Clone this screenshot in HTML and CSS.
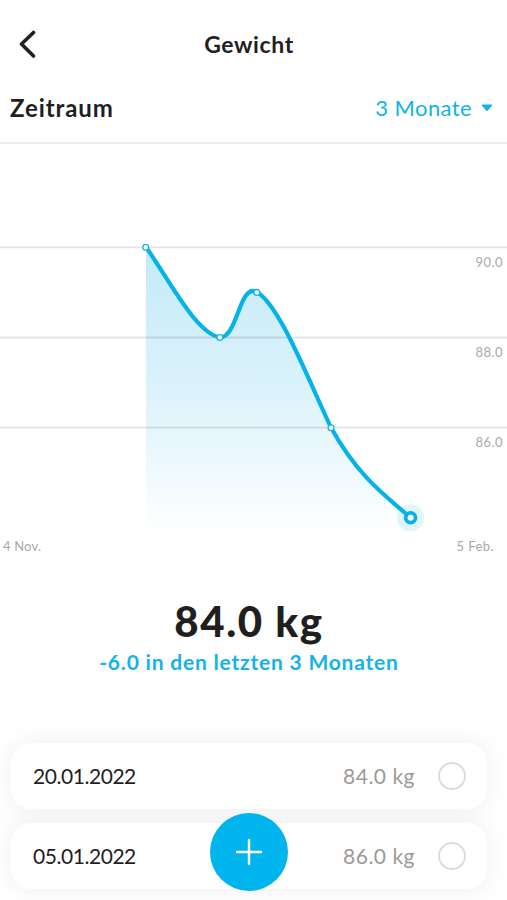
FILE: index.html
```html
<!DOCTYPE html>
<html lang="de">
<head>
    <meta charset="UTF-8">
    <meta name="viewport" content="width=device-width, initial-scale=1.0">
    <title>Gewicht</title>
    <link rel="stylesheet" href="styles.css">
</head>
<body>

    <header class="header">
        <svg class="back" width="18" height="30" viewBox="0 0 18 30">
            <path d="M15.5 3.500 L3.500 15 L15.5 27"/>
        </svg>
        <h1>Gewicht</h1>
    </header>

    <div class="period">
        <h2>Zeitraum</h2>
        <div class="period-select">
            <span>3 Monate</span>
            <svg class="caret" width="12" height="8" viewBox="0 0 12 8">
                <path d="M1.5 1.2 H10.5 L6 6.2 Z"/>
            </svg>
        </div>
    </div>

    <!-- Diagramm -->
    <svg class="chart" width="507" height="426" viewBox="0 144 507 426">
        <defs>
            <linearGradient id="area" x1="0" y1="247" x2="0" y2="536" gradientUnits="userSpaceOnUse">
                <stop offset="0" stop-color="#c3eaf8"/>
                <stop offset="0.5" stop-color="#dcf3fb"/>
                <stop offset="1" stop-color="#ffffff"/>
            </linearGradient>
        </defs>
        <path class="area" d="M146 247 C171 283 196 333 220 337.500 C238 337 239 283 257 292 C280 306 307 377 331 427.500 C357 475 384 495 410.500 517.500 V532 H146 Z"/>
        <path class="grid" d="M0 247.300 H507 M0 337.500 H507 M0 427.700 H507"/>
        <path class="line" d="M146 247 C171 283 196 333 220 337.500 C238 337 239 283 257 292 C280 306 307 377 331 427.500 C357 475 384 495 410.500 517.500"/>
        <circle class="dot" cx="145.700" cy="247.300" r="2.900"/>
        <circle class="dot" cx="219.800" cy="337.500" r="2.900"/>
        <circle class="dot" cx="256.800" cy="292.400" r="2.900"/>
        <circle class="dot" cx="331" cy="427.700" r="2.900"/>
        <circle class="halo" cx="410.600" cy="517.700" r="13.500"/>
        <circle class="dot-last" cx="410.600" cy="517.700" r="4.900"/>
        <text class="axis" x="475.500" y="266.500" textLength="27">90.0</text>
        <text class="axis" x="475.500" y="356.500" textLength="27">88.0</text>
        <text class="axis" x="475.500" y="446.500" textLength="27">86.0</text>
        <text class="axis" x="3" y="550.500" textLength="38">4 Nov.</text>
        <text class="axis" x="456.500" y="550.500" textLength="37">5 Feb.</text>
    </svg>

    <div class="summary">
        <div class="weight">84.0 kg</div>
        <div class="change">-6.0 in den letzten 3 Monaten</div>
    </div>

    <!-- Einträge -->
    <div class="entries">
        <div class="entry">
            <span class="date">20.01.2022</span>
            <span class="value">84.0 kg</span>
            <span class="check"></span>
        </div>
        <div class="entry">
            <span class="date">05.01.2022</span>
            <span class="value">86.0 kg</span>
            <span class="check"></span>
        </div>
    </div>

    <button class="add">
        <svg width="28" height="28" viewBox="0 0 28 28">
            <path d="M14 2 V26 M2 14 H26"/>
        </svg>
    </button>

</body>
</html>
```

FILE: styles.css
```css
* {
    box-sizing: border-box;
}
body {
    margin: 0;
    height: 900px;
    overflow: hidden;
    position: relative;
    font-family: Lato, "Liberation Sans", sans-serif;
    background-color: #fff;
    color: #1f1f1f;
}
h1, h2 {
    margin: 0;
}
.header {
    display: flex;
    align-items: center;
    height: 87px;
    padding: 0 18px;
}
.back {
    fill: none;
    stroke: #1f1f1f;
    stroke-width: 3.6;
    stroke-linecap: round;
    stroke-linejoin: round;
}
.header h1 {
    flex: 1;
    padding-right: 27px;
    text-align: center;
    font-size: 23px;
    line-height: 30px;
    letter-spacing: 0.6px;
}
.period {
    display: flex;
    justify-content: space-between;
    align-items: center;
    height: 57px;
    padding: 0 14px 14px 10px;
    border-bottom: 2px solid #ebebeb;
}
.period h2 {
    font-size: 24px;
    line-height: 30px;
    letter-spacing: 0.9px;
}
.period-select {
    display: flex;
    align-items: center;
    gap: 9px;
    color: #12b3e8;
    font-size: 22px;
    letter-spacing: 0.4px;
}
.caret {
    fill: #12b3e8;
    stroke: #12b3e8;
    stroke-width: 1.5;
    stroke-linejoin: round;
}
.chart {
    display: block;
}
.area {
    fill: url(#area);
}
.grid {
    stroke: #000;
    stroke-opacity: 0.11;
    stroke-width: 1.8;
}
.line {
    fill: none;
    stroke: #06b3e9;
    stroke-width: 4.2;
    stroke-linecap: round;
}
.dot {
    fill: #fff;
    stroke: #12b3e8;
    stroke-width: 1.3;
}
.halo {
    fill: #06b3e9;
    fill-opacity: 0.12;
}
.dot-last {
    fill: #fff;
    stroke: #06b3e9;
    stroke-width: 3.8;
}
.axis {
    fill: #a9a9a9;
    font-size: 13px;
}
.summary {
    height: 173px;
    padding-top: 26px;
    padding-right: 9px;
    text-align: center;
}
.weight {
    font-size: 42px;
    font-weight: 900;
    line-height: 50px;
    letter-spacing: 1.6px;
}
.change {
    margin-top: -2px;
    color: #12b3e8;
    font-size: 21px;
    font-weight: 700;
    line-height: 36px;
    letter-spacing: 0.8px;
}
.entries {
    display: flex;
    flex-direction: column;
    gap: 14px;
    padding: 0 20px 0 11px;
}
.entry {
    display: flex;
    align-items: center;
    height: 66px;
    padding: 0 21px 0 22px;
    border-radius: 20px;
    background-color: #fff;
    box-shadow: 0 0 22px 4px rgba(0, 0, 0, 0.05);
    position: relative;
}
.date {
    flex: 1;
    padding-bottom: 2px;
    font-size: 21px;
    letter-spacing: -0.45px;
}
.value {
    padding-bottom: 2px;
    color: #9a9a9a;
    font-size: 21px;
    letter-spacing: 0.5px;
}
.check {
    width: 28px;
    height: 28px;
    margin-left: 23px;
    border: 2px solid #dcdcdc;
    border-radius: 50%;
}
.add {
    position: absolute;
    left: 210px;
    top: 813px;
    display: flex;
    align-items: center;
    justify-content: center;
    width: 78px;
    height: 78px;
    padding: 0;
    border: none;
    border-radius: 50%;
    background-color: #00b5ee;
}
.add path {
    stroke: #fff;
    stroke-width: 2.4;
    stroke-linecap: round;
}
```
